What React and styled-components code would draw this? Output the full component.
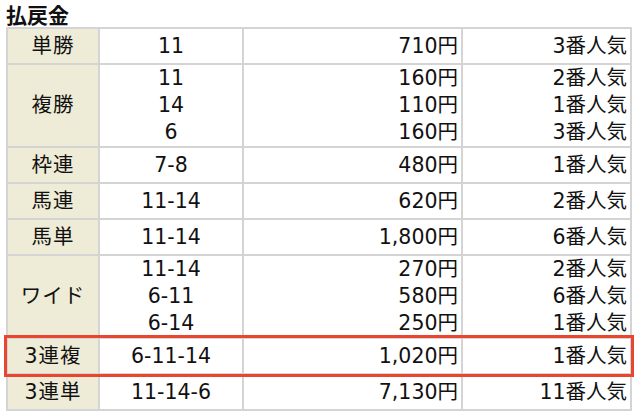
import React from "react";
import styled, { createGlobalStyle } from "styled-components";

const GlobalStyle = createGlobalStyle`
  body {
    margin: 0;
    background: #ffffff;
    font-family: "DejaVu Sans", "Noto Sans CJK JP", sans-serif;
    color: #111111;
  }
`;

const Page = styled.div`
  padding: 3px 8px 0 6px;
`;

const Title = styled.div`
  font-family: "Noto Sans CJK JP", sans-serif;
  font-size: 21px;
  font-weight: 700;
  line-height: 22px;
  height: 24px;
  color: #111;
`;

const Table = styled.div`
  width: 626px;
  display: flex;
  flex-direction: column;
  gap: 2px;
  padding: 2px;
  box-sizing: border-box;
  background: #d4d4d4;
`;

const Row = styled.div`
  display: grid;
  grid-template-columns: 90px 142px 217px 167px;
  gap: 2px;
  position: relative;
  outline: ${(p) => (p.$highlight ? "3px solid #e8462e" : "none")};
  outline-offset: 1px;
  z-index: ${(p) => (p.$highlight ? 1 : 0)};
`;

const Cell = styled.div`
  background: ${(p) => (p.$head ? "#eeebd6" : "#ffffff")};
  display: flex;
  flex-direction: column;
  justify-content: center;
  align-items: ${(p) => (p.$align === "right" ? "flex-end" : "center")};
  padding: ${(p) => (p.$align === "right" ? "0 3px 0 0" : "0")};
  min-height: 34px;
  font-size: 20.5px;
  line-height: 27px;
  font-weight: 400;
  letter-spacing: ${(p) => (p.$head ? "1px" : "0")};
`;

const rows = [
  { name: "単勝", items: [["11", "710円", "3番人気"]] },
  {
    name: "複勝",
    items: [
      ["11", "160円", "2番人気"],
      ["14", "110円", "1番人気"],
      ["6", "160円", "3番人気"],
    ],
  },
  { name: "枠連", items: [["7-8", "480円", "1番人気"]] },
  { name: "馬連", items: [["11-14", "620円", "2番人気"]] },
  { name: "馬単", items: [["11-14", "1,800円", "6番人気"]] },
  {
    name: "ワイド",
    items: [
      ["11-14", "270円", "2番人気"],
      ["6-11", "580円", "6番人気"],
      ["6-14", "250円", "1番人気"],
    ],
  },
  { name: "3連複", items: [["6-11-14", "1,020円", "1番人気"]], highlight: true },
  { name: "3連単", items: [["11-14-6", "7,130円", "11番人気"]] },
];

export default function App() {
  return (
    <Page>
      <GlobalStyle />
      <Title>払戻金</Title>
      <Table>
        {rows.map((r) => (
          <Row key={r.name} $highlight={r.highlight}>
            <Cell $head>{r.name}</Cell>
            <Cell>
              {r.items.map((it, i) => (
                <span key={i}>{it[0]}</span>
              ))}
            </Cell>
            <Cell $align="right">
              {r.items.map((it, i) => (
                <span key={i}>{it[1]}</span>
              ))}
            </Cell>
            <Cell $align="right">
              {r.items.map((it, i) => (
                <span key={i}>{it[2]}</span>
              ))}
            </Cell>
          </Row>
        ))}
      </Table>
    </Page>
  );
}
